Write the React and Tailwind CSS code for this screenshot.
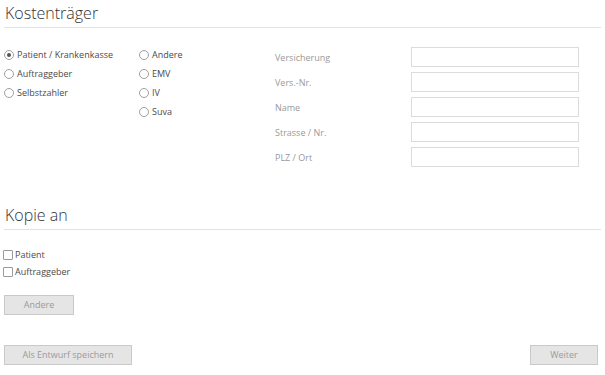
import React from "react";

const Radio = ({ label, checked }) => (
  <label className="flex items-center h-[19px] gap-[3px] text-[9px] text-[#4a4a4a]">
    <span className="w-[10px] h-[10px] rounded-full border border-[#a0a0a0] bg-white flex items-center justify-center">
      {checked && <span className="w-[4px] h-[4px] rounded-full bg-[#555]" />}
    </span>
    {label}
  </label>
);

const Check = ({ label }) => (
  <label className="flex items-center h-[17px] gap-[2px] text-[9px] text-[#4a4a4a]">
    <span className="w-[10px] h-[10px] border border-[#9a9a9a] bg-white rounded-[1px]" />
    {label}
  </label>
);

const Field = ({ label }) => (
  <div className="flex items-center h-[20px]">
    <span className="w-[136px] text-[9px] text-[#9a9a9a] pt-[2px]">{label}</span>
    <div className="w-[168px] h-[20px] border border-[#dcdcdc] bg-white" />
  </div>
);

const Button = ({ children, className }) => (
  <button
    className={
      "h-[20px] bg-[#e5e5e5] border border-[#c9c9c9] text-[9px] text-[#9a9a9a] " +
      className
    }
  >
    {children}
  </button>
);

const App = () => {
  return (
    <div
      className="w-[605px] h-[375px] bg-white overflow-hidden flex flex-col"
      style={{ fontFamily: '"Open Sans", "Noto Sans", sans-serif' }}
    >
      <div className="px-[4px] pt-[2px]">
        <h2 className="text-[16px] font-light text-[#333] leading-[22px] pl-[1px]">Kostenträger</h2>
        <div className="mt-[3px] h-px bg-[#e3e3e3] w-[597px]" />
      </div>

      <div className="flex mt-[19px] pl-[4px]">
        <div className="w-[135px] flex flex-col -mt-[2px]">
          <Radio label="Patient / Krankenkasse" checked />
          <Radio label="Auftraggeber" />
          <Radio label="Selbstzahler" />
        </div>
        <div className="w-[136px] flex flex-col -mt-[2px]">
          <Radio label="Andere" />
          <Radio label="EMV" />
          <Radio label="IV" />
          <Radio label="Suva" />
        </div>
        <div className="flex flex-col gap-[5px]">
          <Field label="Versicherung" />
          <Field label="Vers.-Nr." />
          <Field label="Name" />
          <Field label="Strasse / Nr." />
          <Field label="PLZ / Ort" />
        </div>
      </div>

      <div className="px-[4px] mt-[37px]">
        <h2 className="text-[16px] font-light text-[#333] leading-[22px] pl-[1px]">Kopie an</h2>
        <div className="mt-[3px] h-px bg-[#e3e3e3] w-[597px]" />
      </div>

      <div className="pl-[3px] mt-[16px] flex flex-col">
        <Check label="Patient" />
        <Check label="Auftraggeber" />
      </div>

      <div className="pl-[4px] mt-[10px]">
        <Button className="w-[70px]">Andere</Button>
      </div>

      <div className="flex justify-between pl-[4px] pr-[7px] mt-[30px]">
        <Button className="w-[128px]">Als Entwurf speichern</Button>
        <Button className="w-[68px]">Weiter</Button>
      </div>
    </div>
  );
};

export default App;
